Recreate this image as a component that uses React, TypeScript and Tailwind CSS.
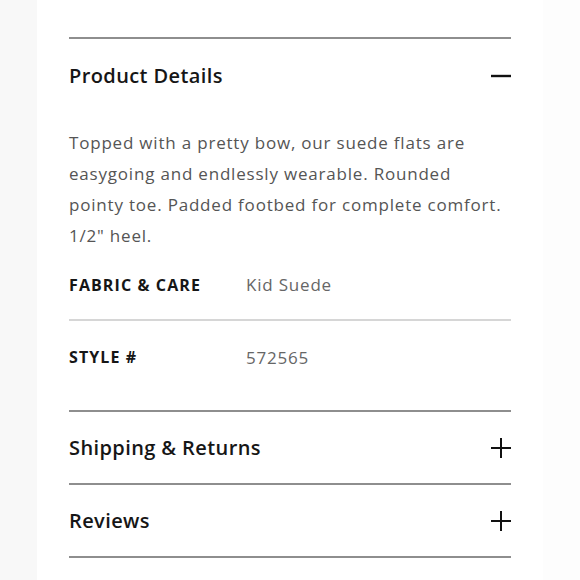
const Plus = () => (
  <svg width="20" height="20" viewBox="0 0 20 20" className="shrink-0">
    <path d="M10 0v20M0 10h20" stroke="#111" strokeWidth="2" />
  </svg>
);

const Minus = () => (
  <svg width="20" height="20" viewBox="0 0 20 20" className="shrink-0">
    <path d="M0 10h20" stroke="#111" strokeWidth="2.4" />
  </svg>
);

const Spec = ({
  label,
  value,
  className,
}: {
  label: string;
  value: string;
  className: string;
}) => (
  <div className={`flex ${className}`}>
    <span className="w-[177px] text-[16px] font-bold tracking-[1.1px] text-[#161616]">
      {label}
    </span>
    <span className="text-[17px] tracking-[0.8px] text-[#666]">{value}</span>
  </div>
);

export default function App() {
  return (
    <div
      className="flex min-h-[580px] bg-white"
      style={{ fontFamily: "'Open Sans', Lato, sans-serif" }}
    >
      <div className="w-[37px] shrink-0 bg-[#f8f8f8]" />
      <div className="w-[506px] shrink-0 bg-white px-8 pt-[37px]">
        <section className="border-t-2 border-[#8e8e8e]">
          <div className="flex h-[74px] items-center justify-between">
            <h2 className="text-[20px] font-semibold tracking-[0.4px] text-[#161616]">
              Product Details
            </h2>
            <Minus />
          </div>
          <p className="mt-[14px] text-[17px] leading-[31px] tracking-[0.8px] text-[#555]">
            Topped with a pretty bow, our suede flats are easygoing and endlessly
            wearable. Rounded pointy toe. Padded footbed for complete comfort.
            1/2" heel.
          </p>
          <Spec
            label="FABRIC & CARE"
            value="Kid Suede"
            className="h-[70px] items-center border-b-2 border-[#d6d6d6]"
          />
          <Spec label="STYLE #" value="572565" className="h-[89px] pt-6" />
        </section>
        <section className="border-t-2 border-[#8e8e8e]">
          <div className="flex h-[71px] items-center justify-between">
            <h2 className="text-[20px] font-semibold tracking-[0.4px] text-[#161616]">
              Shipping &amp; Returns
            </h2>
            <Plus />
          </div>
        </section>
        <section className="border-y-2 border-[#8e8e8e]">
          <div className="flex h-[71px] items-center justify-between">
            <h2 className="text-[20px] font-semibold tracking-[0.4px] text-[#161616]">
              Reviews
            </h2>
            <Plus />
          </div>
        </section>
      </div>
      <div className="flex-1 bg-[#fdfdfd]" />
    </div>
  );
}
